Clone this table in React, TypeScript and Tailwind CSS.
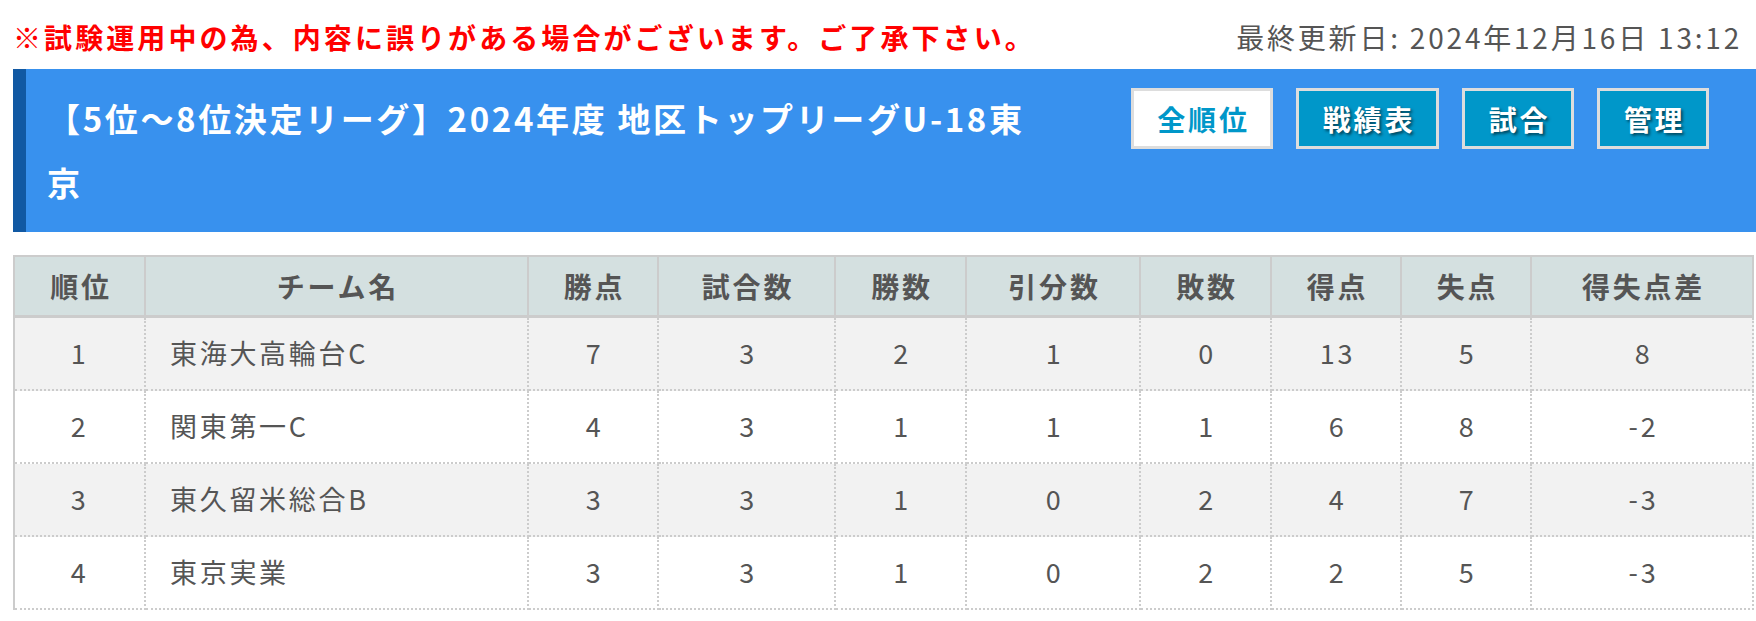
import React from "react";

const columns = [
  { label: "順位", w: "w-[131px]" },
  { label: "チーム名", w: "w-[383px]" },
  { label: "勝点", w: "w-[130px]" },
  { label: "試合数", w: "w-[177px]" },
  { label: "勝数", w: "w-[131px]" },
  { label: "引分数", w: "w-[174px]" },
  { label: "敗数", w: "w-[131px]" },
  { label: "得点", w: "w-[130px]" },
  { label: "失点", w: "w-[130px]" },
  { label: "得失点差", w: "w-[222px]" },
];

const rows = [
  { rank: 1, team: "東海大高輪台C", vals: [7, 3, 2, 1, 0, 13, 5, 8] },
  { rank: 2, team: "関東第一C", vals: [4, 3, 1, 1, 1, 6, 8, -2] },
  { rank: 3, team: "東久留米総合B", vals: [3, 3, 1, 0, 2, 4, 7, -3] },
  { rank: 4, team: "東京実業", vals: [3, 3, 1, 0, 2, 2, 5, -3] },
];

const navButtons = [
  { label: "全順位", w: "w-[142px]", active: true },
  { label: "戦績表", w: "w-[143px]", active: false },
  { label: "試合", w: "w-[112px]", active: false },
  { label: "管理", w: "w-[112px]", active: false },
];

export default function App() {
  return (
    <div
      className="w-[1756px] h-[621px] overflow-hidden bg-white"
      style={{ fontFamily: '"Noto Sans CJK JP", "Noto Sans", sans-serif' }}
    >
      {/* 上部の注意書き */}
      <div className="flex h-[69px] items-center justify-between pl-[13px] pr-[14px] pt-[5px]">
        <p className="text-[28px] font-bold tracking-[0.11em] text-[#ff0000]">
          ※試験運用中の為、内容に誤りがある場合がございます。ご了承下さい。
        </p>
        <p className="text-[28px] tracking-[0.1em] text-[#555]">最終更新日: 2024年12月16日 13:12</p>
      </div>

      {/* タイトル */}
      <div className="ml-[13px] flex h-[163px] border-l-[13px] border-[#1159a3] bg-[#3891ee]">
        <h1 className="w-[1010px] shrink-0 py-[17px] pl-[21px] text-[33px] font-bold leading-[64px] tracking-[0.08em] text-white">
          【5位〜8位決定リーグ】2024年度 地区トップリーグU-18東京
        </h1>
        <div className="ml-[95px] flex gap-[23px] pt-[19px]">
          {navButtons.map((b) => (
            <button
              key={b.label}
              className={`${b.w} h-[61px] shrink-0 border-[3px] border-[#dddddd] pl-[3px] text-[28px] font-bold tracking-[0.1em] ${
                b.active
                  ? "bg-white text-[#0097c9]"
                  : "bg-[#0097c9] text-white [text-shadow:2px_2px_3px_rgba(0,0,0,0.55)]"
              }`}
            >
              {b.label}
            </button>
          ))}
        </div>
      </div>

      {/* 順位表 */}
      <div className="ml-[13px] mt-[23px]">
        <table className="table-fixed border-separate border-spacing-0 border-l-[2px] border-t-[2px] border-[#cccccc] text-[#555]">
          <thead>
            <tr className="bg-[#d4e0e0]">
              {columns.map((c) => (
                <th
                  key={c.label}
                  className={`${c.w} h-[61px] border-b-[3px] border-r-[2px] border-b-[#cccccc] border-r-[#cccccc] border-r-dotted border-b-solid pl-[3px] text-center text-[28px] font-bold tracking-[0.1em]`}
                >
                  {c.label}
                </th>
              ))}
            </tr>
          </thead>
          <tbody>
            {rows.map((r, i) => (
              <tr key={r.rank} className={i % 2 === 0 ? "bg-[#f2f2f2]" : "bg-white"}>
                <td className="h-[73px] border-b-[2px] border-r-[2px] border-dotted border-[#cccccc] text-center text-[27px] tracking-[0.1em]">
                  {r.rank}
                </td>
                <td className="border-b-[2px] border-r-[2px] border-dotted border-[#cccccc] pl-[24px] text-left text-[27px] tracking-[0.1em]">
                  {r.team}
                </td>
                {r.vals.map((v, j) => (
                  <td
                    key={j}
                    className="border-b-[2px] border-r-[2px] border-dotted border-[#cccccc] pl-[3px] text-center text-[27px] tracking-[0.1em]"
                  >
                    {v}
                  </td>
                ))}
              </tr>
            ))}
          </tbody>
        </table>
      </div>
    </div>
  );
}
